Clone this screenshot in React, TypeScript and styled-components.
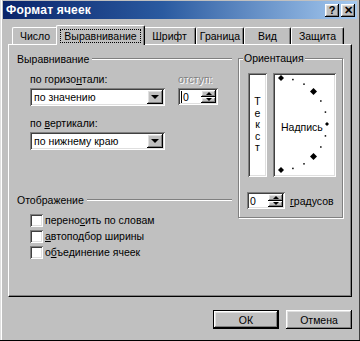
import React from 'react';
import styled, { createGlobalStyle, css } from 'styled-components';

const GlobalStyle = createGlobalStyle`
  html, body {
    margin: 0;
    padding: 0;
    background: #c0c0c0;
  }
  body {
    font-family: "Liberation Sans", Arial, sans-serif;
    font-size: 10.5px;
    color: #000;
  }
`;

const raised = css`
  box-shadow: inset -1px -1px #000, inset 1px 1px #fff, inset -2px -2px #808080, inset 2px 2px #dfdfdf;
`;

const sunken = css`
  box-shadow: inset 1px 1px #808080, inset -1px -1px #fff, inset 2px 2px #404040, inset -2px -2px #dfdfdf;
`;

const Window = styled.div`
  width: 360px;
  height: 341px;
  box-sizing: border-box;
  background: #c0c0c0;
  padding: 1px 3px 0 3px;
  display: flex;
  flex-direction: column;
  border-bottom: 1px solid #000;
  box-shadow: inset 1px 0 #dfdfdf, inset 2px 0 #fff, inset -1px 0 #404040;
`;

const TitleBar = styled.div`
  height: 18px;
  display: flex;
  align-items: center;
  padding: 0 2px 0 3px;
  background: linear-gradient(90deg, #0a246a 0%, #2a5aa0 45%, #a6caf0 100%);
  color: #fff;
  font-weight: bold;
  font-size: 12px;
`;

const TitleText = styled.span`
  flex: 1;
  letter-spacing: 0.2px;
`;

const TitleButton = styled.div<{ $gap?: number }>`
  width: 14px;
  height: 13px;
  margin-left: ${(p) => p.$gap ?? 0}px;
  background: #c0c0c0;
  ${raised};
  color: #000;
  font-size: 11px;
  font-weight: bold;
  display: flex;
  align-items: center;
  justify-content: center;
  line-height: 1;
`;

const TabRow = styled.div`
  height: 25px;
  display: flex;
  align-items: flex-end;
  padding-left: 9px;
`;

const Tab = styled.div<{ $w: number; $active?: boolean }>`
  width: ${(p) => p.$w}px;
  height: 17px;
  box-sizing: border-box;
  display: flex;
  align-items: center;
  justify-content: center;
  background: #c0c0c0;
  border-top: 1px solid #fff;
  border-left: 1px solid #fff;
  border-right: 1px solid #000;
  box-shadow: inset -1px 0 #808080;
  border-radius: 2px 2px 0 0;
  position: relative;
  ${(p) =>
    p.$active &&
    css`
      height: 20px;
      margin: 0 -2px -1px;
      z-index: 1;
    `}
`;

const FocusText = styled.span`
  border: 1px dotted #000;
  padding: 0 3px;
  line-height: 12px;
`;

const Panel = styled.div`
  margin: 0 5px;
  height: 253px;
  box-sizing: border-box;
  border-top: 1px solid #fff;
  border-left: 1px solid #fff;
  border-right: 1px solid #000;
  border-bottom: 1px solid #000;
  box-shadow: inset -1px -1px #808080;
  display: grid;
  grid-template-columns: 215px 105px;
  column-gap: 6px;
  align-items: start;
  padding: 7px 0 0 8px;
`;

const Column = styled.div`
  display: flex;
  flex-direction: column;
`;

const GroupHeader = styled.div<{ $mt?: number }>`
  display: flex;
  align-items: center;
  gap: 3px;
  height: 13px;
  margin-top: ${(p) => p.$mt ?? 0}px;
  &::after {
    content: '';
    flex: 1;
    height: 0;
    border-top: 1px solid #808080;
    border-bottom: 1px solid #fff;
  }
`;

const FieldRow = styled.div<{ $mt: number }>`
  display: flex;
  gap: 13px;
  margin: ${(p) => p.$mt}px 0 0 13px;
`;

const Field = styled.div`
  display: flex;
  flex-direction: column;
`;

const Label = styled.div<{ $disabled?: boolean }>`
  height: 13px;
  line-height: 13px;
  margin-bottom: 2px;
  white-space: nowrap;
  ${(p) =>
    p.$disabled &&
    css`
      color: #808080;
      text-shadow: 1px 1px #fff;
    `}
`;

const Select = styled.div`
  width: 135px;
  height: 18px;
  box-sizing: border-box;
  background: #fff;
  ${sunken};
  display: flex;
  align-items: center;
  padding: 0 2px 0 4px;
`;

const SelectText = styled.span`
  flex: 1;
  white-space: nowrap;
`;

const DropButton = styled.div`
  width: 16px;
  height: 14px;
  background: #c0c0c0;
  ${raised};
  display: flex;
  align-items: center;
  justify-content: center;
`;

const Arrow = styled.span<{ $up?: boolean; $size?: number }>`
  width: 0;
  height: 0;
  border-left: ${(p) => p.$size ?? 4}px solid transparent;
  border-right: ${(p) => p.$size ?? 4}px solid transparent;
  ${(p) =>
    p.$up
      ? css`border-bottom: ${p.$size ?? 4}px solid #000;`
      : css`border-top: ${p.$size ?? 4}px solid #000;`}
`;

const Spin = styled.div<{ $w: number }>`
  width: ${(p) => p.$w}px;
  height: 17px;
  box-sizing: border-box;
  background: #fff;
  ${sunken};
  display: flex;
  align-items: center;
  padding: 2px 2px 2px 3px;
`;

const SpinValue = styled.span<{ $caret?: boolean }>`
  flex: 1;
  line-height: 12px;
  ${(p) =>
    p.$caret &&
    css`
      border-left: 1px solid #000;
      padding-left: 1px;
    `}
`;

const SpinButtons = styled.div`
  width: 15px;
  height: 13px;
  display: flex;
  flex-direction: column;
`;

const SpinHalf = styled.div`
  flex: 1;
  background: #c0c0c0;
  ${raised};
  display: flex;
  align-items: center;
  justify-content: center;
`;

const CheckList = styled.div`
  display: flex;
  flex-direction: column;
  margin: 6px 0 0 13px;
`;

const CheckRow = styled.div`
  height: 16px;
  display: flex;
  align-items: center;
  gap: 2px;
  white-space: nowrap;
`;

const CheckBox = styled.span`
  width: 13px;
  height: 13px;
  box-sizing: border-box;
  background: #fff;
  ${sunken};
`;

const Frame = styled.fieldset`
  margin: 0;
  min-width: 0;
  height: 166px;
  box-sizing: border-box;
  padding: 8px 5px 0 9px;
  border: 1px solid #808080;
  box-shadow: 1px 1px #fff, inset 1px 1px #fff;
`;

const Legend = styled.legend`
  padding: 0 1px;
  margin-left: -5px;
  line-height: 13px;
  background: #c0c0c0;
`;

const OrientRow = styled.div`
  display: flex;
  gap: 6px;
  height: 104px;
`;

const VerticalBox = styled.div`
  width: 19px;
  box-sizing: border-box;
  background: #fff;
  ${sunken};
  display: flex;
  flex-direction: column;
  align-items: center;
  justify-content: center;
  line-height: 11.5px;
`;

const ArcBox = styled.div`
  width: 63px;
  box-sizing: border-box;
  background: #fff;
  ${sunken};
  position: relative;
  display: flex;
  align-items: center;
  padding: 3px 0 0 8px;
`;

const ArcDrawing = styled.svg`
  position: absolute;
  left: 0;
  top: 0;
`;

const DegreeRow = styled.div`
  display: flex;
  align-items: center;
  gap: 5px;
  margin: 15px 0 0 -1px;
`;

const Footer = styled.div`
  display: flex;
  justify-content: flex-end;
  gap: 7px;
  padding-right: 5px;
  margin-top: 13px;
`;

const Button = styled.button<{ $default?: boolean }>`
  width: 66px;
  height: 19px;
  box-sizing: border-box;
  padding: 0;
  font: 10.5px "Liberation Sans", Arial, sans-serif;
  color: #000;
  background: #c0c0c0;
  border: ${(p) => (p.$default ? '1px solid #000' : 'none')};
  ${raised};
`;

const arcPoints = () => {
  const cx = 8;
  const cy = 51;
  const r = 46;
  const items: React.ReactNode[] = [];
  for (let a = -90; a <= 90; a += 15) {
    const t = (a * Math.PI) / 180;
    const x = cx + r * Math.cos(t);
    const y = cy + r * Math.sin(t);
    const big = Math.abs(a) === 45;
    const end = Math.abs(a) === 90;
    const mid = a === 0;
    const s = big ? 3.5 : end ? 3 : mid ? 2 : 0;
    if (s > 0) {
      items.push(
        <polygon
          key={a}
          points={`${x},${y - s} ${x + s},${y} ${x},${y + s} ${x - s},${y}`}
          fill="#000"
        />
      );
    } else {
      items.push(<rect key={a} x={x - 0.75} y={y - 0.75} width={1.5} height={1.5} fill="#000" />);
    }
  }
  return items;
};

function App(): JSX.Element {
  const tabs = [
    { name: 'Число', w: 46 },
    { name: 'Выравнивание', w: 89, active: true },
    { name: 'Шрифт', w: 53 },
    { name: 'Граница', w: 48 },
    { name: 'Вид', w: 47 },
    { name: 'Защита', w: 53 },
  ];

  return (
    <>
      <GlobalStyle />
      <Window>
        <TitleBar>
          <TitleText>Формат ячеек</TitleText>
          <TitleButton>?</TitleButton>
          <TitleButton $gap={2}>✕</TitleButton>
        </TitleBar>

        <TabRow>
          {tabs.map((t) => (
            <Tab key={t.name} $w={t.w} $active={t.active}>
              {t.active ? <FocusText>{t.name}</FocusText> : t.name}
            </Tab>
          ))}
        </TabRow>

        <Panel>
          <Column>
            <GroupHeader>Выравнивание</GroupHeader>
            <FieldRow $mt={8}>
              <Field>
                <Label>
                  по горизо<u>н</u>тали:
                </Label>
                <Select>
                  <SelectText>по значению</SelectText>
                  <DropButton>
                    <Arrow />
                  </DropButton>
                </Select>
              </Field>
              <Field>
                <Label $disabled>отступ:</Label>
                <Spin $w={40}>
                  <SpinValue $caret>0</SpinValue>
                  <SpinButtons>
                    <SpinHalf>
                      <Arrow $up $size={3} />
                    </SpinHalf>
                    <SpinHalf>
                      <Arrow $size={3} />
                    </SpinHalf>
                  </SpinButtons>
                </Spin>
              </Field>
            </FieldRow>
            <FieldRow $mt={11}>
              <Field>
                <Label>
                  по <u>в</u>ертикали:
                </Label>
                <Select>
                  <SelectText>по нижнему краю</SelectText>
                  <DropButton>
                    <Arrow />
                  </DropButton>
                </Select>
              </Field>
            </FieldRow>

            <GroupHeader $mt={43}>Отображение</GroupHeader>
            <CheckList>
              <CheckRow>
                <CheckBox />
                <span>
                  перено<u>с</u>ить по словам
                </span>
              </CheckRow>
              <CheckRow>
                <CheckBox />
                <span>
                  <u>а</u>втоподбор ширины
                </span>
              </CheckRow>
              <CheckRow>
                <CheckBox />
                <span>
                  о<u>б</u>ъединение ячеек
                </span>
              </CheckRow>
            </CheckList>
          </Column>

          <Frame>
            <Legend>Ориентация</Legend>
            <OrientRow>
              <VerticalBox>
                {'Текст'.split('').map((c, i) => (
                  <span key={i}>{c}</span>
                ))}
              </VerticalBox>
              <ArcBox>
                <ArcDrawing width="63" height="104" viewBox="0 0 63 104">
                  {arcPoints()}
                </ArcDrawing>
                <span>Надпись</span>
              </ArcBox>
            </OrientRow>
            <DegreeRow>
              <Spin $w={38}>
                <SpinValue>0</SpinValue>
                <SpinButtons>
                  <SpinHalf>
                    <Arrow $up $size={3} />
                  </SpinHalf>
                  <SpinHalf>
                    <Arrow $size={3} />
                  </SpinHalf>
                </SpinButtons>
              </Spin>
              <span>
                <u>г</u>радусов
              </span>
            </DegreeRow>
          </Frame>
        </Panel>

        <Footer>
          <Button $default>ОК</Button>
          <Button>Отмена</Button>
        </Footer>
      </Window>
    </>
  );
}

export default App;
